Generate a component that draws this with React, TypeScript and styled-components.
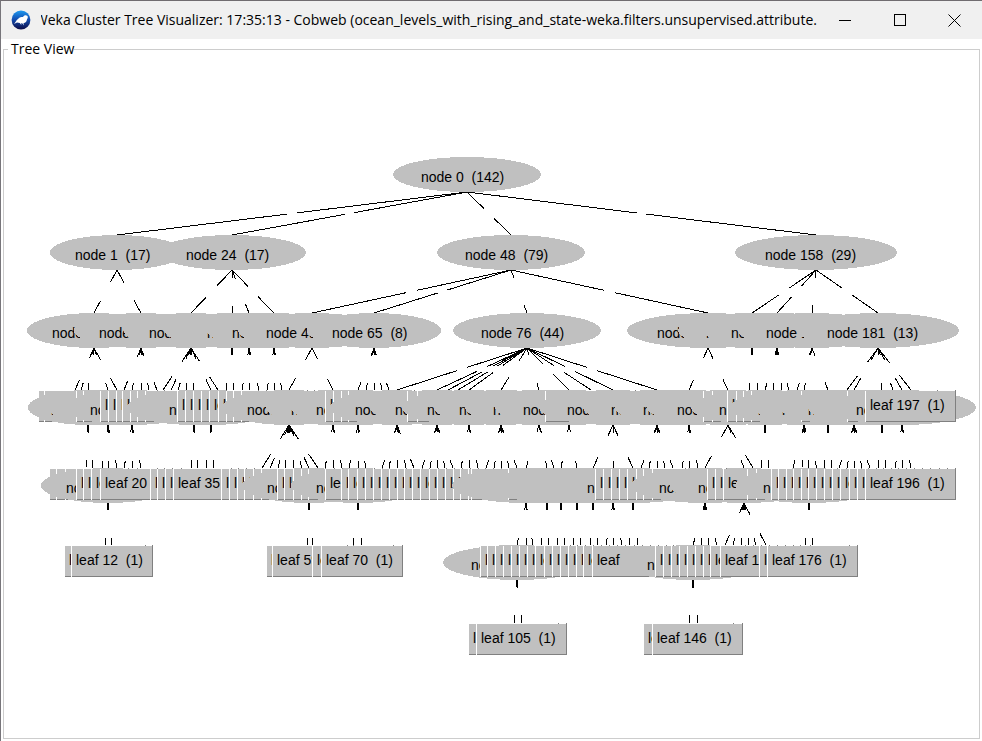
import React from "react";
import styled, { createGlobalStyle } from "styled-components";

const GlobalStyle = createGlobalStyle`
  * { box-sizing: border-box; }
  body { margin: 0; background: #ffffff; }
`;

const Window = styled.div`
  display: flex;
  flex-direction: column;
  min-height: 100vh;
  background: #ffffff;
  border-top: 1px solid #706c70;
  border-left: 1px solid #77757a;
  color: #000000;
  font-family: "Open Sans", "Noto Sans", sans-serif;
`;

const TitleBar = styled.header`
  display: flex;
  align-items: stretch;
  height: 38px;
  background: #f0f0f0;
`;

const AppIcon = styled.svg`
  flex: none;
  align-self: center;
  margin: 0 10px;
`;

const TitleClip = styled.div`
  flex: 1;
  min-width: 0;
  display: flex;
  align-items: center;
  justify-content: flex-end;
  overflow: hidden;
`;

const Title = styled.h1`
  margin: 0;
  flex: none;
  font-size: 14px;
  line-height: 20px;
  font-weight: 400;
  white-space: nowrap;
`;

const CaptionButton = styled.button`
  flex: none;
  display: flex;
  align-items: center;
  justify-content: center;
  width: 55px;
  padding: 0;
  border: 0;
  background: transparent;
  color: #000000;
  &:hover { background: #e0e0e0; }
`;

const Panel = styled.fieldset`
  flex: 1;
  min-width: 0;
  margin: 0 2px 2px;
  padding: 0 0 0 4px;
  border: 1px solid #cdcdcd;
`;

const PanelTitle = styled.legend`
  padding: 0 0 0 3px;
  font-size: 14px;
  line-height: 20px;
`;

const TreeCanvas = styled.svg`
  display: block;
  width: 100%;
  height: 660px;
`;

const Label = styled.text`
  font-family: "Liberation Sans", Arial, sans-serif;
  font-size: 14px;
  white-space: pre;
  fill: #000000;
`;

type Item = { x: number; id: number; count: number; children: Item[]; leaf: boolean };

const N = (x: number, id: number, count: number, children: Item[] = []): Item => ({
  x, id, count, children, leaf: false,
});
const L = (x: number, id: number): Item => ({ x, id, count: 1, children: [], leaf: true });
/* A run of sibling leaves with consecutive ids. */
const run = (first: number, ...xs: number[]): Item[] => xs.map((x, i) => L(x, first + i));

const tree = N(467, 0, 142, [
  N(117, 1, 17, [
    N(94, 2, 11, [
      L(75, 4), L(81, 5),
      N(88, 3, 2, run(6, 86, 93)),
      N(108, 9, 3, [L(102, 8), N(108, 10, 2, [L(105, 11), L(112, 12)]), L(117, 13)]),
      L(117, 14),
    ]),
    N(141, 15, 6, [
      L(124, 16),
      N(132, 17, 3, run(18, 124, 132, 141)),
      L(141, 21), L(149, 22), L(157, 23),
    ]),
  ]),
  N(232, 24, 17, [
    N(191, 25, 8, [
      ...run(26, 163, 171, 178, 186),
      N(194, 30, 2, run(31, 191, 198)),
      N(211, 33, 2, run(34, 206, 214)),
      L(218, 36),
    ]),
    N(232, 37, 2, run(38, 226, 234)),
    N(249, 40, 3, run(41, 242, 250, 259)),
    N(274, 44, 3, run(45, 267, 274, 282)),
  ]),
  N(511, 48, 79, [
    N(312, 49, 12, [
      N(289, 50, 9, [
        ...run(51, 262, 270, 278, 285, 294, 302),
        N(309, 57, 2, [L(307, 58), L(313, 59)]),
        L(318, 60),
      ]),
      N(333, 61, 3, run(62, 325, 334, 342)),
    ]),
    N(374, 65, 8, [
      N(358, 66, 4, [L(349, 67), N(358, 68, 2, [L(353, 69), L(362, 70)]), L(366, 71)]),
      ...run(72, 366, 374, 382, 389),
    ]),
    N(527, 76, 44, [
      N(397, 77, 5, run(78, 382, 389, 398, 406, 414)),
      N(437, 83, 5, run(84, 422, 430, 438, 445, 453)),
      L(448, 89), L(458, 90),
      N(469, 91, 3, run(92, 461, 470, 478)),
      N(501, 95, 5, [...run(96, 486, 494, 501, 509), L(517, 100)]),
      N(539, 101, 6, [
        N(526, 102, 4, [N(517, 103, 2, [L(514, 104), L(522, 105)]), L(526, 106), L(533, 107)]),
        N(547, 108, 2, run(109, 541, 549)),
        L(554, 111),
      ]),
      N(569, 112, 4, [
        N(561, 113, 2, run(114, 557, 565)),
        N(577, 116, 2, run(117, 573, 581)),
      ]),
      L(591, 119),
      N(613, 120, 7, [
        N(593, 121, 2, run(122, 590, 598)),
        N(613, 124, 3, run(125, 606, 614, 622)),
        N(633, 128, 2, run(129, 629, 638)),
      ]),
      N(657, 131, 5, run(132, 641, 649, 657, 665, 673)),
    ]),
    N(708, 137, 14, [
      N(689, 138, 3, run(139, 682, 689, 698)),
      N(728, 142, 11, [
        N(705, 143, 5, [
          N(693, 144, 2, [L(689, 145), L(698, 146)]),
          ...run(147, 701, 709, 717),
        ]),
        N(744, 150, 6, run(151, 725, 733, 741, 749, 756, 766)),
        L(753, 157),
      ]),
    ]),
  ]),
  N(816, 158, 29, [
    N(752, 159, 2, run(160, 749, 758)),
    N(777, 162, 5, [
      N(765, 163, 2, run(164, 761, 769)),
      ...run(166, 773, 782, 789),
    ]),
    N(812, 169, 8, [
      L(797, 170),
      N(804, 171, 5, [
        L(793, 172), L(802, 173),
        N(809, 174, 2, [L(805, 175), L(813, 176)]),
        L(817, 177),
      ]),
      N(828, 178, 2, run(179, 824, 832)),
    ]),
    N(878, 181, 13, [
      L(847, 182),
      N(854, 183, 5, run(184, 839, 847, 854, 862, 870)),
      N(882, 189, 2, run(190, 878, 886)),
      L(893, 192),
      N(902, 193, 3, run(194, 895, 903, 911)),
      L(911, 197),
    ]),
  ]),
]);

const levels: Item[][] = [];
for (let row = [tree]; row.length > 0; row = row.flatMap((n) => n.children)) levels.push(row);

const PAN = { x: -8, y: -59 };
const ROW_TOP = [157, 235, 313, 390, 468, 545, 623];
const NODE_HEIGHT = 35;
const LEAF_HEIGHT = 32;
const digits = (n: number) => String(n).length;

/* Edges break around the empty label box at their midpoint. */
function Edge({ x1, y1, x2, y2 }: { x1: number; y1: number; x2: number; y2: number }) {
  const dx = x2 - x1;
  const dy = y2 - y1;
  const half = Math.min(5 / Math.max(Math.abs(dx), 1), 14 / dy);
  const a = 0.5 - half;
  const b = 0.5 + half;
  return (
    <path
      d={`M${x1} ${y1}L${x1 + dx * a} ${y1 + dy * a}M${x1 + dx * b} ${y1 + dy * b}L${x2} ${y2}`}
    />
  );
}

function ClusterNode({ item, top }: { item: Item; top: number }) {
  const d = digits(item.id) + digits(item.count);
  return (
    <g>
      <ellipse
        cx={item.x}
        cy={top + NODE_HEIGHT / 2}
        rx={46 + 7 * d}
        ry={NODE_HEIGHT / 2}
        fill="#c0c0c0"
        shapeRendering="crispEdges"
      />
      <Label x={item.x - Math.round(28 + 4.5 * d)} y={top + 25}>
        {`node ${item.id}  (${item.count})`}
      </Label>
    </g>
  );
}

function LeafNode({ item, top }: { item: Item; top: number }) {
  const width = 64 + 9 * digits(item.id);
  const left = Math.floor(item.x - width / 2);
  return (
    <g>
      <g shapeRendering="crispEdges">
        <rect x={left} y={top + 1} width={width} height={LEAF_HEIGHT - 1} fill="#c0c0c0" />
        <rect x={left} y={top + 1} width={1} height={LEAF_HEIGHT - 1} fill="#ffffff" />
        <rect x={left + 1} y={top + LEAF_HEIGHT - 1} width={width - 1} height={1} fill="#808080" />
        <rect x={left + width - 1} y={top} width={1} height={LEAF_HEIGHT} fill="#808080" />
      </g>
      <Label x={left + 5} y={top + 20}>
        {`leaf ${item.id}  (1)`}
      </Label>
    </g>
  );
}

function ClusterTree() {
  return (
    <TreeCanvas role="img" aria-label="Cluster tree">
      <g transform={`translate(${PAN.x} ${PAN.y})`}>
        <g stroke="#000000" strokeWidth={1} fill="none" shapeRendering="crispEdges">
          {levels.flatMap((row, depth) =>
            row.flatMap((parent) =>
              parent.children.map((child) => (
                <Edge
                  key={`${parent.id}-${child.id}-${child.x}`}
                  x1={parent.x}
                  y1={ROW_TOP[depth] + NODE_HEIGHT}
                  x2={child.x}
                  y2={ROW_TOP[depth + 1]}
                />
              )),
            ),
          )}
        </g>
        {levels.map((row, depth) => (
          <g key={depth}>
            {row.map((item) =>
              item.leaf ? (
                <LeafNode key={`l${item.id}-${item.x}`} item={item} top={ROW_TOP[depth]} />
              ) : (
                <ClusterNode key={`n${item.id}`} item={item} top={ROW_TOP[depth]} />
              ),
            )}
          </g>
        ))}
      </g>
    </TreeCanvas>
  );
}

export default function App() {
  return (
    <>
      <GlobalStyle />
      <Window>
        <TitleBar>
          <AppIcon width="20" height="20" viewBox="0 0 20 20" aria-hidden="true">
            <defs>
              <linearGradient id="globe" x1="0" y1="0" x2="0" y2="1">
                <stop offset="0" stopColor="#1e9af0" />
                <stop offset="0.45" stopColor="#1450b4" />
                <stop offset="1" stopColor="#0c0c48" />
              </linearGradient>
            </defs>
            <circle cx="10" cy="10" r="9.4" fill="url(#globe)" />
            <path
              d="M3 14C5 12 5 10 7 9C9 7 10 7 12 7C13 5 15 4.500 16.500 6C17.500 7.500 16 9 15.500 11C15 12.500 13.500 13 12.500 13L13 15.500L11.500 13.500L10 13.300L10.500 15.300L8.800 13L6 12.500Z"
              fill="#ffffff"
            />
          </AppIcon>
          <TitleClip>
            <Title>
              Weka Cluster Tree Visualizer: 17:35:13 - Cobweb
              (ocean_levels_with_rising_and_state-weka.filters.unsupervised.attribute.
            </Title>
          </TitleClip>
          <CaptionButton aria-label="Minimize">
            <svg width="12" height="13" shapeRendering="crispEdges">
              <path d="M0 6.500H12" stroke="currentColor" />
            </svg>
          </CaptionButton>
          <CaptionButton aria-label="Maximize">
            <svg width="12" height="12" shapeRendering="crispEdges">
              <rect x="0.500" y="0.500" width="11" height="11" fill="none" stroke="currentColor" />
            </svg>
          </CaptionButton>
          <CaptionButton aria-label="Close">
            <svg width="13" height="13">
              <path d="M0.500 0.500L12.500 12.500M12.500 0.500L0.500 12.500" stroke="currentColor" />
            </svg>
          </CaptionButton>
        </TitleBar>
        <Panel>
          <PanelTitle>Tree View</PanelTitle>
          <ClusterTree />
        </Panel>
      </Window>
    </>
  );
}
